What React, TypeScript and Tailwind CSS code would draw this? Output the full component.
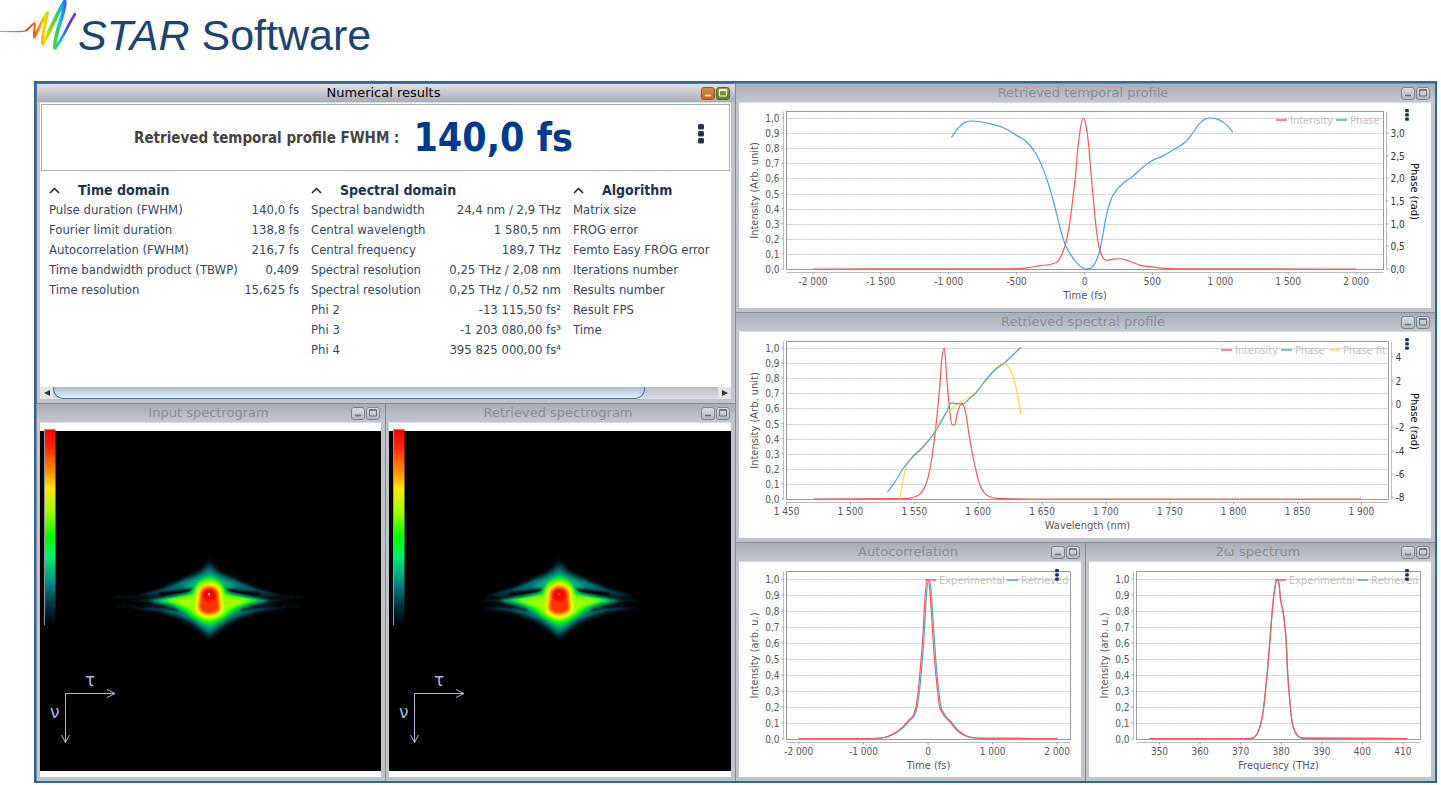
import { ReactNode } from "react";
import clsx from "clsx";

type Point = [number, number];
type Tick = [number, string];

interface Series {
  color: string;
  points: Point[];
}

interface LegendItem {
  color: string;
  label: string;
  x: number;
}

const RED = "#ff5555";
const BLUE = "#4aa3df";
const YELLOW = "#ffd84a";

const temporalIntensity: Point[] = [
  [-2000, 0], [-600, 0.001], [-450, 0.004], [-400, 0.01], [-327, 0.022], [-240, 0.033], [-192, 0.055],
  [-162, 0.106], [-138, 0.17], [-113, 0.28], [-88, 0.45], [-66, 0.62], [-49, 0.8], [-32, 0.92], [-8, 1],
  [10, 0.955], [27, 0.85], [49, 0.625], [71, 0.404], [86, 0.27], [106, 0.15], [130, 0.084], [165, 0.058],
  [214, 0.066], [263, 0.068], [337, 0.05], [410, 0.024], [509, 0.013], [607, 0.004], [750, 0.001], [2000, 0],
];

const temporalPhase: Point[] = [
  [-980, 0.872], [-929, 0.934], [-880, 0.971], [-830, 0.98], [-708, 0.965], [-609, 0.94], [-499, 0.885],
  [-425, 0.841], [-364, 0.773], [-302, 0.658], [-253, 0.525], [-216, 0.404], [-179, 0.27], [-142, 0.161],
  [-93, 0.084], [-44, 0.029], [-7, 0.003], [17, 0], [42, 0.004], [79, 0.04], [111, 0.117], [135, 0.227], [160, 0.349],
  [194, 0.459], [238, 0.525], [288, 0.57], [349, 0.609], [423, 0.669], [484, 0.711], [570, 0.746],
  [668, 0.797], [742, 0.841], [791, 0.894], [840, 0.956], [889, 0.994], [929, 1], [988, 0.989],
  [1049, 0.951], [1093, 0.905],
];

const spectralIntensity: Point[] = [
  [1471, 0], [1543, 0.002], [1548.7, 0.01], [1555, 0.037], [1558.6, 0.086], [1561, 0.15], [1563.2, 0.24],
  [1565.7, 0.395], [1567.8, 0.55], [1570, 0.75], [1571.4, 0.914], [1573.5, 1], [1575.3, 0.815],
  [1577.4, 0.616], [1579.5, 0.492], [1581.7, 0.49], [1583.4, 0.556], [1585.9, 0.62], [1588, 0.625],
  [1590.2, 0.572], [1592.3, 0.46], [1594.8, 0.33], [1597.6, 0.214], [1600.5, 0.113], [1604, 0.05],
  [1609, 0.015], [1617, 0.004], [1640, 0], [1900, 0],
];

const spectralPhase: Point[] = [
  [1529.1, 0.046], [1534.5, 0.108], [1540.8, 0.197], [1548, 0.27], [1558.6, 0.362], [1567.5, 0.46],
  [1572.8, 0.54], [1576.3, 0.594], [1579, 0.636], [1583.4, 0.631], [1588, 0.631], [1594, 0.671],
  [1599.4, 0.715], [1604.7, 0.775], [1611.8, 0.843], [1620.7, 0.903], [1633.5, 1.005],
];

const spectralPhaseFit: Point[] = [
  [1538.7, 0], [1540.5, 0.086], [1543, 0.197], [1548.7, 0.283], [1554.3, 0.318], [1562, 0.395],
  [1569.2, 0.495], [1574.6, 0.56], [1581.7, 0.616], [1588.8, 0.656], [1594, 0.678], [1599.4, 0.715],
  [1604.7, 0.77], [1611.8, 0.848], [1615.4, 0.876], [1619.6, 0.896], [1623.2, 0.881], [1626.7, 0.826],
  [1630.3, 0.715], [1633.5, 0.56],
];

const autocorrelation: Point[] = [
  [-2000, 0.003], [-900, 0.003], [-700, 0.008], [-610, 0.019], [-505, 0.04], [-400, 0.073], [-295, 0.119],
  [-225, 0.152], [-182, 0.212], [-147, 0.317], [-112, 0.473], [-77, 0.66], [-49, 0.87], [-7, 1], [28, 0.93],
  [63, 0.72], [105, 0.473], [140, 0.327], [175, 0.212], [218, 0.167], [337, 0.108], [442, 0.056],
  [547, 0.025], [688, 0.008], [933, 0.004], [2000, 0.003],
];

const autocorrelationRetrieved: Point[] = autocorrelation.map(([x, y]) => [
  Math.abs(x) > 800 ? x : x + 20,
  y,
]);

const secondHarmonic: Point[] = [
  [347.5, 0.003], [372.3, 0.003], [373.2, 0.008], [374.1, 0.035], [375, 0.098], [375.6, 0.18], [376.1, 0.296],
  [376.7, 0.452], [377.3, 0.64], [377.9, 0.83], [378.5, 0.952], [379, 0.999], [379.5, 0.963], [379.8, 0.88],
  [380.3, 0.817], [380.7, 0.754], [381.2, 0.62], [381.6, 0.41], [382.1, 0.244], [382.6, 0.119],
  [383.3, 0.052], [384.1, 0.019], [385.2, 0.006], [411.1, 0.003],
];

const timeDomain = [
  ["Pulse duration (FWHM)", "140,0 fs"],
  ["Fourier limit duration", "138,8 fs"],
  ["Autocorrelation (FWHM)", "216,7 fs"],
  ["Time bandwidth product (TBWP)", "0,409"],
  ["Time resolution", "15,625 fs"],
];

const spectralDomain = [
  ["Spectral bandwidth", "24,4 nm / 2,9 THz"],
  ["Central wavelength", "1 580,5 nm"],
  ["Central frequency", "189,7 THz"],
  ["Spectral resolution", "0,25 THz / 2,08 nm"],
  ["Spectral resolution", "0,25 THz / 0,52 nm"],
  ["Phi 2", "-13 115,50 fs²"],
  ["Phi 3", "-1 203 080,00 fs³"],
  ["Phi 4", "395 825 000,00 fs⁴"],
];

const algorithm = [
  ["Matrix size", ""],
  ["FROG error", ""],
  ["Femto Easy FROG error", ""],
  ["Iterations number", ""],
  ["Results number", ""],
  ["Result FPS", ""],
  ["Time", ""],
];

// monotone cubic, keeps the flat tails flat
const smoothPath = (pts: Point[]) => {
  const step = (i: number) => pts[i + 1][0] - pts[i][0];
  const slope = (i: number) => (pts[i + 1][1] - pts[i][1]) / step(i);
  const tangents = pts.map((_, i) => {
    if (i === 0) return slope(0);
    if (i === pts.length - 1) return slope(i - 1);
    const a = slope(i - 1);
    const b = slope(i);
    if (a * b <= 0) return 0;
    const mean = (a * step(i) + b * step(i - 1)) / (step(i) + step(i - 1));
    const limit = 3 * Math.min(Math.abs(a), Math.abs(b));
    return Math.sign(mean) * Math.min(Math.abs(mean), limit);
  });
  let d = `M${pts[0][0]} ${pts[0][1]}`;
  for (let i = 1; i < pts.length; i++) {
    const [x0, y0] = pts[i - 1];
    const [x1, y1] = pts[i];
    const h = (x1 - x0) / 3;
    d += `C${x0 + h} ${y0 + tangents[i - 1] * h} ${x1 - h} ${y1 - tangents[i] * h} ${x1} ${y1}`;
  }
  return d;
};

const Dots = ({ large = false }: { large?: boolean }) => (
  <svg className={large ? "w-2 h-5" : "w-1 h-3"} viewBox={large ? "0 0 8 20" : "0 0 4 13"}>
    {[0, 1, 2].map((i) => (
      <rect
        key={i}
        x={large ? 1 : 0}
        y={large ? i * 7 : i * 4.6}
        width={large ? 6 : 4}
        height={large ? 5.4 : 3.6}
        rx={large ? 1.5 : 0.8}
        fill="#1b3350"
      />
    ))}
  </svg>
);

interface ChartProps {
  width: number;
  height: number;
  plot: { left: number; right: number; top: number; zero: number; one: number };
  scale: (v: number) => number;
  xTicks: Tick[];
  xTitle: string;
  yTitle: string;
  series: Series[];
  legend: LegendItem[];
  legendY: number;
  rightTicks?: Tick[];
}

const Chart = ({
  width,
  height,
  plot,
  scale,
  xTicks,
  xTitle,
  yTitle,
  series,
  legend,
  legendY,
  rightTicks,
}: ChartProps) => {
  const { left, right, top, zero, one } = plot;
  const y = (v: number) => zero - v * (zero - one);
  const levels = Array.from({ length: 11 }, (_, i) => i / 10);
  const bottom = zero + 0.5;
  const midY = (top + bottom) / 2;

  return (
    <svg
      className="block w-full font-['DejaVu_Sans_Condensed','DejaVu_Sans',sans-serif]"
      viewBox={`0 0 ${width} ${height}`}
      fill="#555"
      fontSize="10"
    >
      {levels.slice(1).map((v) => (
        <line
          key={v}
          x1={left}
          x2={right}
          y1={Math.round(y(v)) + 0.5}
          y2={Math.round(y(v)) + 0.5}
          stroke="#c4c4c4"
          strokeDasharray="2 1"
        />
      ))}
      <rect x={left} y={top} width={right - left} height={bottom - top} fill="none" stroke="#9a9a9a" />
      <path
        d={`M${left - 3} ${top}V${bottom}M${left} ${bottom + 3}H${right}`}
        stroke="#bdbdbd"
        fill="none"
      />
      {levels.map((v) => (
        <g key={v}>
          <line x1={left - 5} x2={left - 3} y1={y(v)} y2={y(v)} stroke="#9a9a9a" />
          <text x={left - 7} y={y(v) + 4} textAnchor="end">
            {v.toFixed(1).replace(".", ",")}
          </text>
        </g>
      ))}
      {xTicks.map(([v, label]) => (
        <g key={label}>
          <line x1={scale(v)} x2={scale(v)} y1={bottom + 3} y2={bottom + 5} stroke="#9a9a9a" />
          <text x={scale(v)} y={bottom + 15} textAnchor="middle">
            {label}
          </text>
        </g>
      ))}
      {rightTicks && (
        <g fill="#333">
          <line x1={right + 3} x2={right + 3} y1={top} y2={bottom} stroke="#bdbdbd" />
          {rightTicks.map(([pos, label]) => (
            <g key={label}>
              <line x1={right + 3} x2={right + 5} y1={pos} y2={pos} stroke="#9a9a9a" />
              <text x={right + 7} y={pos + 4}>
                {label}
              </text>
            </g>
          ))}
          <text transform={`translate(${width - 20} ${midY + 1}) rotate(90)`} textAnchor="middle" fontSize="11" fill="#000">
            Phase (rad)
          </text>
        </g>
      )}
      <text x={(left + right) / 2} y={bottom + 29} textAnchor="middle" fontSize="11">
        {xTitle}
      </text>
      <text transform={`translate(19 ${midY}) rotate(-90)`} textAnchor="middle" fontSize="11">
        {yTitle}
      </text>
      {legend.map((item) => (
        <g key={item.label}>
          <line x1={item.x} x2={item.x + 11} y1={legendY} y2={legendY} stroke={item.color} strokeWidth="1.4" />
          <text x={item.x + 14} y={legendY + 4} fontSize="11" fill="#c2c2c2">
            {item.label}
          </text>
        </g>
      ))}
      {series.map((s, i) => (
        <path
          key={i}
          d={smoothPath(s.points.map(([px, py]) => [scale(px), y(py)]))}
          fill="none"
          stroke={s.color}
          strokeWidth="1.2"
        />
      ))}
    </svg>
  );
};

interface WindowProps {
  title: string;
  active?: boolean;
  menuClass?: string;
  children: ReactNode;
}

const Window = ({ title, active = false, menuClass, children }: WindowProps) => {
  const button = "w-[14px] h-[13px] rounded-[3px] border flex items-center justify-center";
  const idle = "border-[#7d828d] bg-linear-to-b from-[#d8dbe1] to-[#b4b8c1]";
  return (
    <section
      className={clsx(
        "min-w-0 flex flex-col border-t border-l bg-[#bfc3ca] pb-1 pr-1 pl-[3px]",
        active ? "border-[#6b717c]" : "border-[#858a95]",
      )}
    >
      <header
        className={clsx(
          "-mr-1 -ml-[3px] pr-[5px] h-[18px] grid grid-cols-[1fr_auto_1fr] items-center bg-linear-to-b",
          active ? "from-[#dfe1e6] to-[#a9adb7]" : "from-[#a9adb7] to-[#c3c7cf]",
        )}
      >
        <h2
          className={clsx(
            "col-start-2 text-[13px] leading-4 font-['DejaVu_Sans',sans-serif]",
            active ? "text-black" : "text-[#8d8f93]",
          )}
        >
          {title}
        </h2>
        <div className="flex justify-end gap-px">
          <button
            aria-label="Minimize"
            className={clsx(button, active ? "border-[#8c5a2c] bg-linear-to-b from-[#d98a4a] to-[#c96408]" : idle)}
          >
            <svg className="w-3 h-3" viewBox="0 0 12 12">
              <path d="M3 8.5h6" stroke={active ? "#fff" : "#6b707b"} strokeWidth="1.6" />
            </svg>
          </button>
          <button
            aria-label="Maximize"
            className={clsx(button, active ? "border-[#55661f] bg-linear-to-b from-[#8fa14c] to-[#64800a]" : idle)}
          >
            <svg className="w-3 h-3" viewBox="0 0 12 12" fill="none">
              <path d="M2.5 3h7v6h-7z" stroke={active ? "#fff" : "#6b707b"} />
              <path d="M2 3h8" stroke={active ? "#fff" : "#6b707b"} strokeWidth="1.6" />
            </svg>
          </button>
        </div>
      </header>
      <div className="relative flex-1 flex flex-col bg-white border-t border-[#d5dbe3]">
        {children}
        {menuClass && (
          <button aria-label="Chart menu" className={clsx("absolute flex", menuClass)}>
            <Dots />
          </button>
        )}
      </div>
    </section>
  );
};

const ResultTable = ({ title, rows }: { title: string; rows: string[][] }) => (
  <table className="w-[250px] shrink-0 self-start text-[13px] leading-5 text-[#34495e]">
    <thead>
      <tr>
        <th colSpan={2} className="p-0 text-left text-sm leading-5 text-[#1b3350] font-bold">
          <button className="flex items-center gap-[18px]">
            <svg className="w-[11px] h-3" viewBox="0 0 11 12" fill="none">
              <path d="M1 9L5.5 4.5L10 9" stroke="#222" strokeWidth="1.5" />
            </svg>
            {title}
          </button>
        </th>
      </tr>
    </thead>
    <tbody>
      {rows.map(([label, value], i) => (
        <tr key={i}>
          <td className="p-0 whitespace-nowrap">{label}</td>
          <td className="p-0 whitespace-nowrap text-right">{value}</td>
        </tr>
      ))}
    </tbody>
  </table>
);

const NumericalResults = () => (
  <div className="flex-1 flex flex-col font-['DejaVu_Sans_Condensed','DejaVu_Sans',sans-serif]">
    <div className="mx-px mt-px h-[67px] border border-[#a9adb5] grid grid-cols-[92px_1fr_auto] items-center">
      <div className="col-start-2 flex items-center gap-[14px] font-bold whitespace-nowrap">
        <span className="text-[15px] leading-5 text-[#444]">Retrieved temporal profile FWHM :</span>
        <output className="text-[39px] leading-[44px] text-[#003a8c]">140,0 fs</output>
      </div>
      <button aria-label="Results menu" className="mr-6 mb-2 flex">
        <Dots large />
      </button>
    </div>
    <div className="flex-1 flex gap-3 overflow-hidden pt-[9px] pl-[9px] pb-[27px]">
      <ResultTable title="Time domain" rows={timeDomain} />
      <ResultTable title="Spectral domain" rows={spectralDomain} />
      <ResultTable title="Algorithm" rows={algorithm} />
    </div>
    <div className="h-3 flex bg-linear-to-b from-[#b9bcc4] to-[#dcdee3]">
      <button aria-label="Scroll left" className="w-[13px] flex items-center justify-center bg-[#e2e4e8]">
        <svg className="w-[6px] h-[6px]" viewBox="0 0 6 6">
          <path d="M6 0v6L0 3z" fill="#333" />
        </svg>
      </button>
      <div className="flex-1 flex">
        <div className="w-[89%] rounded-b-[10px] border border-t-0 border-[#51708c] bg-linear-to-b from-[#a7bdd4] to-[#dff1fb]" />
      </div>
      <button aria-label="Scroll right" className="w-[13px] flex items-center justify-center bg-[#e2e4e8]">
        <svg className="w-[6px] h-[6px]" viewBox="0 0 6 6">
          <path d="M0 0v6l6-3z" fill="#333" />
        </svg>
      </button>
    </div>
  </div>
);

const Spectrogram = ({ id, width, measured = false }: { id: string; width: number; measured?: boolean }) => (
  <svg className="block w-full" viewBox={`0 0 ${width} 354`}>
    <defs>
      <linearGradient id={`${id}-bar`} x1="0" y1="0" x2="0" y2="1">
        <stop offset="0" stopColor="#f00" />
        <stop offset="0.08" stopColor="#ff2000" />
        <stop offset="0.22" stopColor="#ff9500" />
        <stop offset="0.3" stopColor="#ffe800" />
        <stop offset="0.42" stopColor="#9dff00" />
        <stop offset="0.55" stopColor="#00ff00" />
        <stop offset="0.65" stopColor="#00ef70" />
        <stop offset="0.78" stopColor="#008c8c" />
        <stop offset="0.9" stopColor="#003040" />
        <stop offset="1" stopColor="#000" />
      </linearGradient>
      <linearGradient id={`${id}-wing`} gradientUnits="userSpaceOnUse" x1="80" y1="0" x2="576" y2="0">
        <stop offset="0" stopColor="#00323f" stopOpacity="0" />
        <stop offset="0.15" stopColor="#00404e" />
        <stop offset="0.36" stopColor="#008484" />
        <stop offset="0.64" stopColor="#008484" />
        <stop offset="0.85" stopColor="#00404e" />
        <stop offset="1" stopColor="#00323f" stopOpacity="0" />
      </linearGradient>
      <filter id={`${id}-soft`} x="-20%" y="-20%" width="140%" height="140%">
        <feGaussianBlur stdDeviation="6" />
      </filter>
      <filter id={`${id}-fine`} x="-20%" y="-50%" width="140%" height="200%">
        <feGaussianBlur stdDeviation="3" />
      </filter>
    </defs>
    <rect y="8" width={width} height="340" fill="#000" />
    <rect x="4.5" y="6.5" width="11" height="196" fill={`url(#${id}-bar)`} />
    <path d="M4.5 202V6.5H15.5" stroke="#999" fill="none" />
    <path d="M25.500 320V270.500H75M67 266.500l8 4l-8 4M21.500 312l4 7.500l4-7.500" stroke="#b6b3e6" fill="none" />
    <g fill="#b6b3e6" fontSize="17" className="font-['DejaVu_Sans',sans-serif]">
      <text x="45" y="263">τ</text>
      <text x="10" y="295">ν</text>
    </g>

    {/* trace, three units per pixel */}
    <g transform={`translate(${measured ? 60 : 61} 127) scale(.3333)`}>
      <g filter={`url(#${id}-soft)`}>
        <path
          d="M130 134C180 120 220 98 255 82C292 70 312 52 328 26C344 52 364 70 400 82C436 98 476 120 526 134L480 152L526 172C470 186 440 198 400 216C364 236 344 254 328 270C312 254 292 236 256 216C216 198 186 186 130 172L180 152Z"
          fill="#00222e"
        />
        <path
          d="M190 122C226 106 250 92 280 80C306 72 318 60 328 46C338 60 350 72 376 80C406 92 430 106 466 122L400 140L470 178C436 186 410 196 388 210C360 224 342 242 328 254C314 242 296 224 268 210C246 196 220 186 186 178L256 140Z"
          fill="#006a70"
        />
        <path
          d="M250 104C284 88 312 76 328 66C344 76 372 88 406 104L384 130L430 176C390 192 356 224 328 240C300 224 266 192 226 176L272 130Z"
          fill="#00b080"
        />
      </g>
      <g filter={`url(#${id}-fine)`} fill="none" stroke={`url(#${id}-wing)`}>
        <path d="M110 138C180 128 220 112 262 94M546 138C476 128 436 112 394 94" strokeWidth="8" />
        <path d="M100 174C170 175 210 182 260 200M556 174C486 175 446 182 396 200" strokeWidth="7" />
        <path d="M88 151.5L328 153L568 151.500" strokeWidth="7" />
        {measured && (
          <path d="M48 141H110M48 169H110M548 141H608M548 169H608" stroke="#001c26" strokeWidth="6" strokeDasharray="14 5" />
        )}
      </g>
      <g filter={`url(#${id}-fine)`}>
        <path d="M180 131C216 122 250 124 274 117C266 128 230 131 186 136ZM476 131C440 122 406 124 382 117C390 128 426 131 470 136Z" fill="#000" stroke="#000" strokeWidth="5" />
        <path d="M120 164C170 164 200 169 232 180M536 164C486 164 456 169 424 180" stroke="#000c12" strokeWidth="6" fill="none" />
        <path d="M148 152C200 140 250 134 290 128H366C406 134 456 140 508 152C466 161 424 170 386 184H270C232 170 190 161 148 152Z" fill="#00a878" />
        <path
          d="M178 151C220 140 258 138 280 126C287 96 304 83 328 80C352 83 369 96 376 126C398 138 436 140 478 151C440 160 414 172 396 187C370 208 346 222 328 224C310 222 286 208 260 187C242 172 216 160 178 151Z"
          fill="#0f0"
        />
        <path
          d="M204 151C240 144 266 143 284 135C287 106 304 94 328 92C352 94 369 106 372 135C390 143 416 144 452 151C424 159 398 168 384 180C366 198 348 208 328 210C308 208 290 198 272 180C258 168 232 159 204 151Z"
          fill="#9dff00"
        />
        <path d="M290 140C290 114 306 100 328 98C350 100 366 114 366 140C364 152 371 160 370 174C367 193 348 203 328 203C308 203 289 193 286 174C285 160 292 152 290 140Z" fill="#ff0" />
        <path d="M296 138C297 116 310 106 328 105C346 106 359 116 360 138C359 152 364 162 363 174C360 189 345 196 328 196C311 196 296 189 293 174C292 162 297 152 296 138Z" fill="#ff9a00" />
        <path d="M302 136C303 120 314 112 328 111C342 112 353 120 354 136C352 152 358 164 357 174C352 185 341 190 328 190C315 190 304 185 299 174C298 164 304 152 302 136Z" fill="#ff3000" />
        <ellipse cx="328" cy="134" rx="20" ry="19" fill="#f00" />
      </g>
      <rect x="325" y="129" width="5" height="7" fill={measured ? "#fff" : "#ff5050"} />
    </g>
  </svg>
);

const Logo = () => (
  <svg className="w-[76px] h-[51px] shrink-0" viewBox="0 0 228 153" fill="none">
    <defs>
      <linearGradient id="rainbow" gradientUnits="userSpaceOnUse" x1="78" y1="76" x2="228" y2="76">
        <stop offset="0" stopColor="#f02a1c" />
        <stop offset="0.16" stopColor="#ff5a10" />
        <stop offset="0.28" stopColor="#ff9a00" />
        <stop offset="0.38" stopColor="#f0e000" />
        <stop offset="0.5" stopColor="#7ddc10" />
        <stop offset="0.62" stopColor="#2fd060" />
        <stop offset="0.7" stopColor="#14b4e8" />
        <stop offset="0.8" stopColor="#3a58f0" />
        <stop offset="0.9" stopColor="#6a30e0" />
        <stop offset="1" stopColor="#9a28d8" />
      </linearGradient>
    </defs>
    <path d="M0 94L60 93Q76 93 82 88L84 91Q76 97 60 97L0 96Z" fill="#f0584c" />
    <g stroke="url(#rainbow)" strokeLinecap="round" strokeLinejoin="round">
      <path d="M80 91C90 82 96 74 104 69C108 80 98 98 103 111" strokeWidth="6" />
      <path d="M103 110C114 90 132 52 142 38C140 66 122 108 129 130" strokeWidth="9" />
      <path d="M129 130C146 100 178 26 194 4C200 30 158 110 165 144" strokeWidth="11" />
      <path d="M165 144C184 124 206 70 225 42" strokeWidth="8" />
    </g>
  </svg>
);

const App = () => {
  const temporalScale = (v: number) => 345.5 + v * 0.1358;
  const spectralScale = (v: number) => 47.5 + (v - 1450) * 1.2776;
  const autoScale = (v: number) => 189 + v * 0.0646;
  const harmonicScale = (v: number) => 70.5 + (v - 350) * 4.057;
  const smallPlot = { left: 47.5, right: 331.5, top: 9.5, zero: 177, one: 17 };
  const smallLegend = [
    { color: RED, label: "Experimental", x: 186 },
    { color: BLUE, label: "Retrieved", x: 268 },
  ];

  return (
    <main className="bg-white">
      <header className="flex items-start pb-5">
        <Logo />
        <h1 className="pt-[9px] pl-[2px] text-[43px] leading-[52px] text-[#1b4473] whitespace-nowrap font-['Liberation_Sans',sans-serif]">
          <i>STAR</i> Software
        </h1>
      </header>

      <div className="ml-[34px] mr-1 border-2 border-[#2d66a5] grid grid-cols-[minmax(0,699fr)_minmax(0,700fr)]">
        <div className="flex flex-col">
          <Window title="Numerical results" active>
            <NumericalResults />
          </Window>
          <div className="flex-1 grid grid-cols-[minmax(0,349fr)_minmax(0,350fr)]">
            <Window title="Input spectrogram">
              <Spectrogram id="input" width={341} measured />
            </Window>
            <Window title="Retrieved spectrogram">
              <Spectrogram id="retrieved" width={342} />
            </Window>
          </div>
        </div>

        <div className="flex flex-col">
          <Window title="Retrieved temporal profile" menuClass="top-[6px] right-[22px]">
            <Chart
              width={692}
              height={205}
              plot={{ left: 47.5, right: 644.5, top: 8.5, zero: 166, one: 15 }}
              scale={temporalScale}
              xTicks={[
                [-2000, "-2 000"],
                [-1500, "-1 500"],
                [-1000, "-1 000"],
                [-500, "-500"],
                [0, "0"],
                [500, "500"],
                [1000, "1 000"],
                [1500, "1 500"],
                [2000, "2 000"],
              ]}
              rightTicks={[
                [166, "0,0"],
                [143, "0,5"],
                [121, "1,0"],
                [98, "1,5"],
                [75, "2,0"],
                [53, "2,5"],
                [30, "3,0"],
              ]}
              xTitle="Time (fs)"
              yTitle="Intensity (Arb. unit)"
              legendY={17}
              legend={[
                { color: RED, label: "Intensity", x: 537 },
                { color: BLUE, label: "Phase", x: 597 },
              ]}
              series={[
                { color: BLUE, points: temporalPhase },
                { color: RED, points: temporalIntensity },
              ]}
            />
          </Window>
          <Window title="Retrieved spectral profile" menuClass="top-[6px] right-[22px]">
            <Chart
              width={692}
              height={206}
              plot={{ left: 47.5, right: 649.5, top: 9.5, zero: 167, one: 16 }}
              scale={spectralScale}
              xTicks={[
                [1450, "1 450"],
                [1500, "1 500"],
                [1550, "1 550"],
                [1600, "1 600"],
                [1650, "1 650"],
                [1700, "1 700"],
                [1750, "1 750"],
                [1800, "1 800"],
                [1850, "1 850"],
                [1900, "1 900"],
              ]}
              rightTicks={[
                [165, "-8"],
                [142, "-6"],
                [119, "-4"],
                [95, "-2"],
                [72, "0"],
                [49, "2"],
                [25, "4"],
              ]}
              xTitle="Wavelength (nm)"
              yTitle="Intensity (Arb. unit)"
              legendY={18}
              legend={[
                { color: RED, label: "Intensity", x: 482 },
                { color: BLUE, label: "Phase", x: 542 },
                { color: YELLOW, label: "Phase fit", x: 590 },
              ]}
              series={[
                { color: RED, points: spectralIntensity },
                { color: YELLOW, points: spectralPhaseFit },
                { color: BLUE, points: spectralPhase },
              ]}
            />
          </Window>
          <div className="flex-1 grid grid-cols-2">
            <Window title="Autocorrelation" menuClass="top-[7px] right-[22px]">
              <Chart
                width={342}
                height={215}
                plot={smallPlot}
                scale={autoScale}
                xTicks={[
                  [-2000, "-2 000"],
                  [-1000, "-1 000"],
                  [0, "0"],
                  [1000, "1 000"],
                  [2000, "2 000"],
                ]}
                xTitle="Time (fs)"
                yTitle="Intensity (arb. u.)"
                legendY={18}
                legend={smallLegend}
                series={[
                  { color: BLUE, points: autocorrelationRetrieved },
                  { color: RED, points: autocorrelation },
                ]}
              />
            </Window>
            <Window title="2ω spectrum" menuClass="top-[7px] right-[22px]">
              <Chart
                width={342}
                height={215}
                plot={smallPlot}
                scale={harmonicScale}
                xTicks={[
                  [350, "350"],
                  [360, "360"],
                  [370, "370"],
                  [380, "380"],
                  [390, "390"],
                  [400, "400"],
                  [410, "410"],
                ]}
                xTitle="Frequency (THz)"
                yTitle="Intensity (arb. u.)"
                legendY={18}
                legend={smallLegend}
                series={[
                  { color: BLUE, points: secondHarmonic },
                  { color: RED, points: secondHarmonic },
                ]}
              />
            </Window>
          </div>
        </div>
      </div>
    </main>
  );
};

export default App;
